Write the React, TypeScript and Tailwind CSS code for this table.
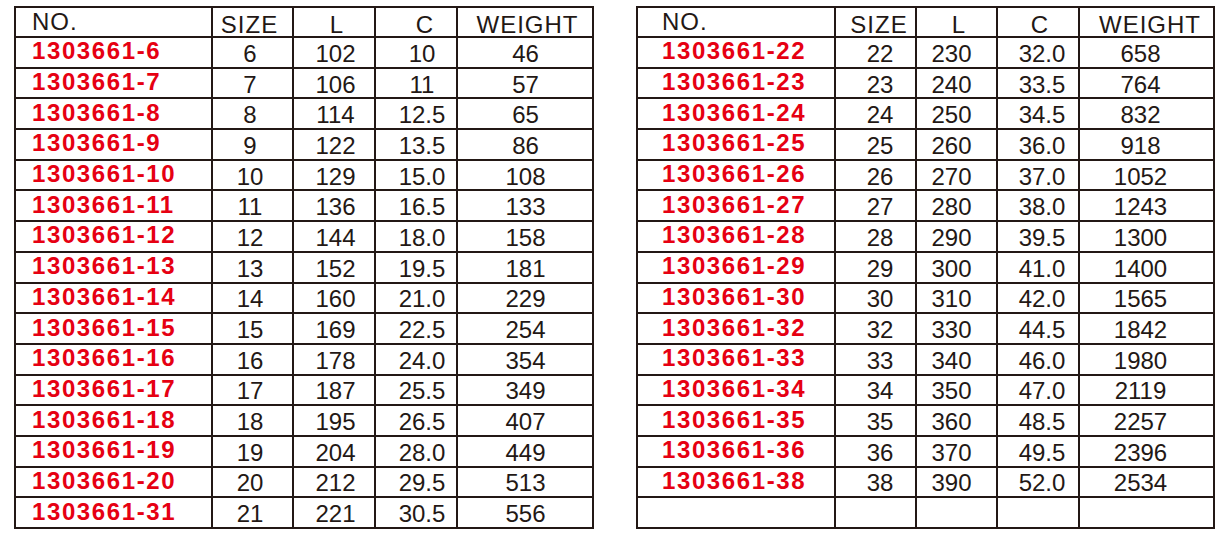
import React from "react";

type Row = [string, string, string, string, string];

const leftRows: Row[] = [
  ["1303661-6", "6", "102", "10", "46"],
  ["1303661-7", "7", "106", "11", "57"],
  ["1303661-8", "8", "114", "12.5", "65"],
  ["1303661-9", "9", "122", "13.5", "86"],
  ["1303661-10", "10", "129", "15.0", "108"],
  ["1303661-11", "11", "136", "16.5", "133"],
  ["1303661-12", "12", "144", "18.0", "158"],
  ["1303661-13", "13", "152", "19.5", "181"],
  ["1303661-14", "14", "160", "21.0", "229"],
  ["1303661-15", "15", "169", "22.5", "254"],
  ["1303661-16", "16", "178", "24.0", "354"],
  ["1303661-17", "17", "187", "25.5", "349"],
  ["1303661-18", "18", "195", "26.5", "407"],
  ["1303661-19", "19", "204", "28.0", "449"],
  ["1303661-20", "20", "212", "29.5", "513"],
  ["1303661-31", "21", "221", "30.5", "556"],
];

const rightRows: Row[] = [
  ["1303661-22", "22", "230", "32.0", "658"],
  ["1303661-23", "23", "240", "33.5", "764"],
  ["1303661-24", "24", "250", "34.5", "832"],
  ["1303661-25", "25", "260", "36.0", "918"],
  ["1303661-26", "26", "270", "37.0", "1052"],
  ["1303661-27", "27", "280", "38.0", "1243"],
  ["1303661-28", "28", "290", "39.5", "1300"],
  ["1303661-29", "29", "300", "41.0", "1400"],
  ["1303661-30", "30", "310", "42.0", "1565"],
  ["1303661-32", "32", "330", "44.5", "1842"],
  ["1303661-33", "33", "340", "46.0", "1980"],
  ["1303661-34", "34", "350", "47.0", "2119"],
  ["1303661-35", "35", "360", "48.5", "2257"],
  ["1303661-36", "36", "370", "49.5", "2396"],
  ["1303661-38", "38", "390", "52.0", "2534"],
  ["", "", "", "", ""],
];

type Cfg = {
  widths: string[];
  noPad: string;
  pads: string[]; // for SIZE, L, C, WEIGHT
  headPads: string[];
};

const leftCfg: Cfg = {
  widths: ["w-[197px]", "w-[81px]", "w-[82px]", "w-[82px]", "w-[136px]"],
  noPad: "pl-[16px]",
  pads: ["pr-[5px]", "pl-[3px]", "pl-[12px]", "pl-[1px]"],
  headPads: ["pr-[6px]", "pl-[6px]", "pl-[18px]", "pl-[5px]"],
};

const rightCfg: Cfg = {
  widths: ["w-[198px]", "w-[81px]", "w-[81px]", "w-[82px]", "w-[135px]"],
  noPad: "pl-[24px]",
  pads: ["pl-[9px]", "pr-[10px]", "pl-[8px]", "pr-[12px]"],
  headPads: ["pl-[7px]", "pl-[5px]", "pl-[4px]", "pl-[7px]"],
};

const border = "border-2 border-[#231815]";

function DataTable({ rows, cfg }: { rows: Row[]; cfg: Cfg }) {
  return (
    <table
      className={`table-fixed border-collapse ${border}`}
      style={{ fontFamily: '"Liberation Sans", Arial, sans-serif' }}
    >
      <colgroup>
        {cfg.widths.map((w, i) => (
          <col key={i} className={w} />
        ))}
      </colgroup>
      <thead>
        <tr className="h-[30px]">
          <th
            className={`${border} ${cfg.noPad} p-0 pt-[1px] text-left align-top text-[24px] leading-[26px] font-normal tracking-[1px] text-[#231815]`}
          >
            NO.
          </th>
          {["SIZE", "L", "C", "WEIGHT"].map((h, i) => (
            <th
              key={h}
              className={`${border} ${cfg.headPads[i]} p-0 pt-[5px] text-center align-top text-[24px] leading-[23px] font-normal tracking-[1px] text-[#231815]`}
            >
              {h}
            </th>
          ))}
        </tr>
      </thead>
      <tbody>
        {rows.map((r, ri) => (
          <tr key={ri} className="h-[30.69px]">
            <td
              className={`${border} ${cfg.noPad} p-0 pb-[3px] text-left align-middle text-[24px] leading-[25px] font-bold tracking-[1.6px] text-[#e60012]`}
            >
              {r[0]}
            </td>
            {r.slice(1).map((v, ci) => (
              <td
                key={ci}
                className={`${border} ${cfg.pads[ci]} p-0 pt-[2px] text-center align-middle text-[24px] leading-[25px] font-normal text-[#231815]`}
              >
                {v}
              </td>
            ))}
          </tr>
        ))}
      </tbody>
    </table>
  );
}

export default function App() {
  return (
    <div className="w-[1225px] h-[541px] bg-white pt-[6px] pl-[14px] flex gap-[42px] items-start">
      <DataTable rows={leftRows} cfg={leftCfg} />
      <DataTable rows={rightRows} cfg={rightCfg} />
    </div>
  );
}
